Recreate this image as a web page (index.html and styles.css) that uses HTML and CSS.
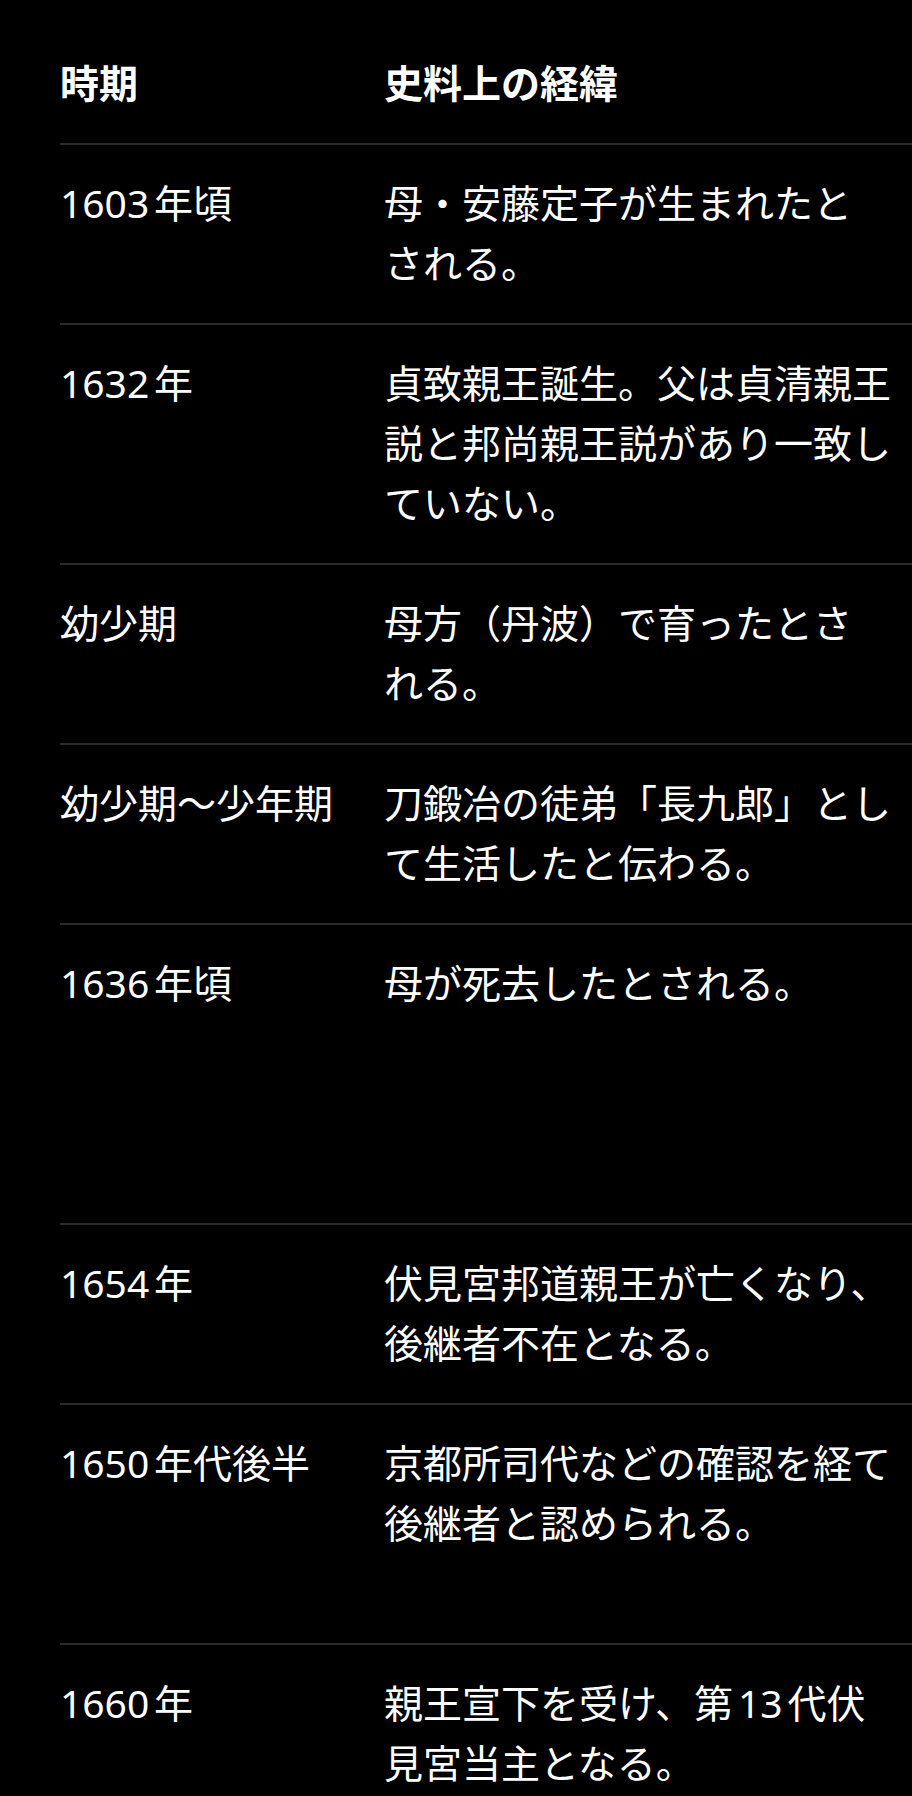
FILE: index.html
```html
<!DOCTYPE html>
<html lang="ja">
<head>
    <meta charset="UTF-8">
    <meta name="viewport" content="width=device-width, initial-scale=1.0">
    <title>貞致親王 年表</title>
    <link rel="stylesheet" href="styles.css">
</head>
<body>
    <div class="timeline">
        <table class="history">
            <colgroup>
                <col class="col-date">
                <col class="col-event">
            </colgroup>
            <thead>
                <tr>
                    <th>時期</th>
                    <th>史料上の経緯</th>
                </tr>
            </thead>
            <tbody>
                <tr>
                    <td>1603年頃</td>
                    <td>母・安藤定子が生まれたと<br>される。</td>
                </tr>
                <tr>
                    <td>1632年</td>
                    <td>貞致親王誕生。父は貞清親王<br>説と邦尚親王説があり一致し<br>ていない。</td>
                </tr>
                <tr>
                    <td>幼少期</td>
                    <td>母方（丹波）で育ったとさ<br>れる。</td>
                </tr>
                <tr>
                    <td>幼少期〜少年期</td>
                    <td>刀鍛冶の徒弟「長九郎」とし<br>て生活したと伝わる。</td>
                </tr>
                <tr class="row-xl">
                    <td>1636年頃</td>
                    <td>母が死去したとされる。</td>
                </tr>
                <tr>
                    <td>1654年</td>
                    <td>伏見宮邦道親王が亡くなり、<br>後継者不在となる。</td>
                </tr>
                <tr class="row-lg">
                    <td>1650年代後半</td>
                    <td>京都所司代などの確認を経て<br>後継者と認められる。</td>
                </tr>
                <tr>
                    <td>1660年</td>
                    <td>親王宣下を受け、第13代伏<br>見宮当主となる。</td>
                </tr>
            </tbody>
        </table>
    </div>
</body>
</html>
```

FILE: styles.css
```css
body {
    margin: 0;
    padding: 0;
    background-color: #000;
    color: #fff;
    font-family: "Noto Sans", "Noto Sans CJK JP", sans-serif;
    font-size: 39px;
    line-height: 60px;
}

.timeline {
    padding: 25px 0 0 60px;
    overflow: hidden;
}

.history {
    width: 100%;
    table-layout: fixed;
    border-collapse: collapse;
    text-autospace: normal;
}

.col-date {
    width: 324px;
}

.history th,
.history td {
    padding: 28px 0 30px;
    text-align: left;
    vertical-align: top;
    white-space: nowrap;
}

.history th {
    font-weight: 700;
}

.history tr {
    border-bottom: 2px solid #2a2a2a;
}

.history tbody tr:last-child {
    border-bottom: none;
}

.history tr.row-lg {
    height: 240px;
}

.history tr.row-xl {
    height: 300px;
}
```
